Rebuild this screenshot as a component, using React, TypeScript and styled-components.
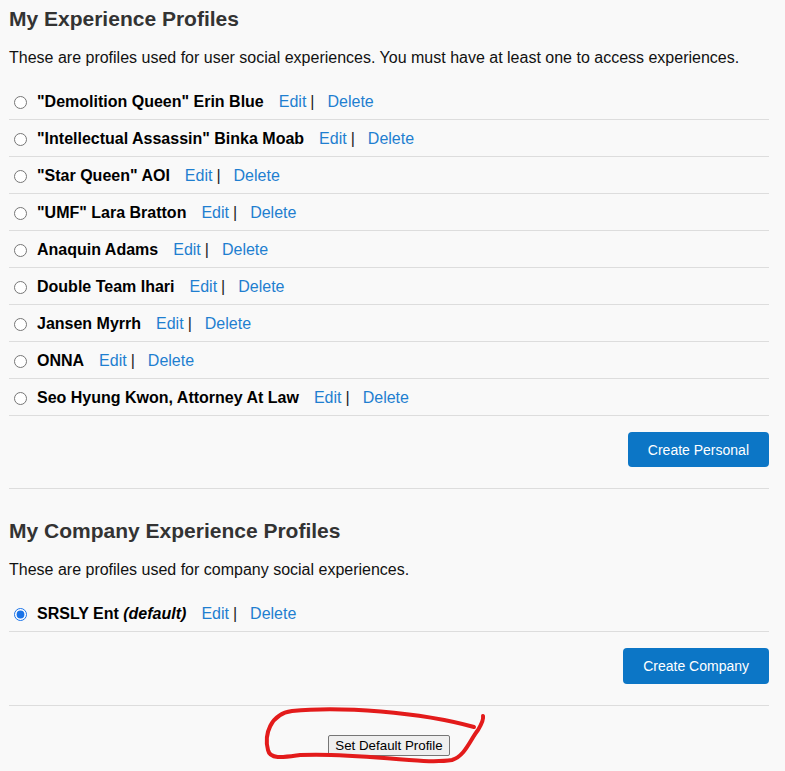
import * as React from "react"
import styled, { createGlobalStyle } from "styled-components"

const GlobalStyle = createGlobalStyle`
  html, body {
    margin: 0;
    padding: 0;
    background: #f9f9f9;
  }
  body {
    font-family: "Liberation Sans", Arial, sans-serif;
    color: #111;
  }
`

const colors = {
  heading: "#333333",
  text: "#111111",
  link: "#1f7fd0",
  line: "#dddddd",
  primary: "#0c76c6",
}

// Page layout
const Page = styled.main`
  position: relative;
  width: 785px;
  min-height: 771px;
  box-sizing: border-box;
  padding: 0 16px 0 9px;
  overflow: hidden;
`

const Section = styled.section<{ $first?: boolean }>`
  display: flex;
  flex-direction: column;
  padding-top: ${(p) => (p.$first ? "7px" : "30px")};
  padding-bottom: 21px;
  border-bottom: 1px solid ${colors.line};
`

const Title = styled.h2`
  margin: 0;
  font-size: 21px;
  line-height: 24px;
  font-weight: 700;
  color: ${colors.heading};
`

const Description = styled.p`
  margin: 18px 0 16px;
  font-size: 16px;
  line-height: 18px;
  color: ${colors.text};
`

const ProfileList = styled.ul`
  list-style: none;
  margin: 0;
  padding: 0;
`

const ProfileRow = styled.li`
  display: flex;
  align-items: center;
  box-sizing: border-box;
  height: 37px;
  padding-top: 2px;
  border-bottom: 1px solid ${colors.line};
  font-size: 16px;
`

const Radio = styled.input.attrs({ type: "radio" })`
  width: 13px;
  height: 13px;
  margin: 0 10px 0 5px;
  accent-color: #1a73e8;
`

const Name = styled.label`
  font-weight: 700;
  color: #000;
  margin-right: 15px;

  em {
    font-style: italic;
  }
`

const ActionLink = styled.a<{ $gap?: number }>`
  color: ${colors.link};
  text-decoration: none;
  margin-left: ${(p) => p.$gap ?? 0}px;
  cursor: pointer;
`

const Pipe = styled.span`
  color: #222;
  margin-left: 4px;
`

const Actions = styled.div`
  display: flex;
  justify-content: flex-end;
  margin-top: 16px;
`

const PrimaryButton = styled.button<{ $height: number }>`
  font-family: "Liberation Sans", Arial, sans-serif;
  font-size: 14px;
  height: ${(p) => p.$height}px;
  padding: 0 20px;
  border: none;
  border-radius: 4px;
  background: ${colors.primary};
  color: #fff;
  cursor: pointer;
`

const Footer = styled.div`
  display: flex;
  justify-content: center;
  padding-top: 29px;
`

const DefaultButton = styled.button`
  font-family: "Liberation Sans", Arial, sans-serif;
  font-size: 13.333px;
  height: 21px;
  padding: 1px 6px;
  border: 1px solid #767676;
  border-radius: 2px;
  background: #efefef;
  color: #000;
`

const Annotation = styled.svg`
  position: absolute;
  top: 0;
  left: 0;
  pointer-events: none;
`

type Profile = { name: string; isDefault?: boolean }

const personal: Profile[] = [
  { name: "\"Demolition Queen\" Erin Blue" },
  { name: "\"Intellectual Assassin\" Binka Moab" },
  { name: "\"Star Queen\" AOI" },
  { name: "\"UMF\" Lara Bratton" },
  { name: "Anaquin Adams" },
  { name: "Double Team Ihari" },
  { name: "Jansen Myrrh" },
  { name: "ONNA" },
  { name: "Seo Hyung Kwon, Attorney At Law" },
]

const company: Profile[] = [{ name: "SRSLY Ent", isDefault: true }]

const ProfileItem = ({ profile, id }: { profile: Profile; id: string }) => (
  <ProfileRow>
    <Radio id={id} name="defaultProfile" defaultChecked={profile.isDefault} />
    <Name htmlFor={id}>
      {profile.name}
      {profile.isDefault && (
        <>
          {" "}
          <em>(default)</em>
        </>
      )}
    </Name>
    <ActionLink>Edit</ActionLink>
    <Pipe>|</Pipe>
    <ActionLink $gap={13}>Delete</ActionLink>
  </ProfileRow>
)

const App: React.FC = () => {
  return (
    <Page>
      <GlobalStyle />
      <Section $first>
        <Title>My Experience Profiles</Title>
        <Description>
          These are profiles used for user social experiences. You must have at least one to access experiences.
        </Description>
        <ProfileList>
          {personal.map((p, i) => (
            <ProfileItem key={p.name} profile={p} id={`personal-${i}`} />
          ))}
        </ProfileList>
        <Actions>
          <PrimaryButton $height={35}>Create Personal</PrimaryButton>
        </Actions>
      </Section>

      <Section>
        <Title>My Company Experience Profiles</Title>
        <Description>These are profiles used for company social experiences.</Description>
        <ProfileList>
          {company.map((p, i) => (
            <ProfileItem key={p.name} profile={p} id={`company-${i}`} />
          ))}
        </ProfileList>
        <Actions>
          <PrimaryButton $height={36}>Create Company</PrimaryButton>
        </Actions>
      </Section>

      <Footer>
        <DefaultButton>Set Default Profile</DefaultButton>
      </Footer>

      {/* hand-drawn red marker around the button */}
      <Annotation width="785" height="771" viewBox="0 0 785 771">
        <path
          d="M 474 727 C 420 712 340 706 292 711 C 270 714 264 735 268 750 C 270 760 285 757 300 755 C 360 752 420 765 452 760 C 465 756 470 740 478 730 C 481 725 484 720 483 716"
          fill="none"
          stroke="#e31b1b"
          strokeWidth="4"
          strokeLinecap="round"
          strokeLinejoin="round"
        />
      </Annotation>
    </Page>
  )
}

export default App
